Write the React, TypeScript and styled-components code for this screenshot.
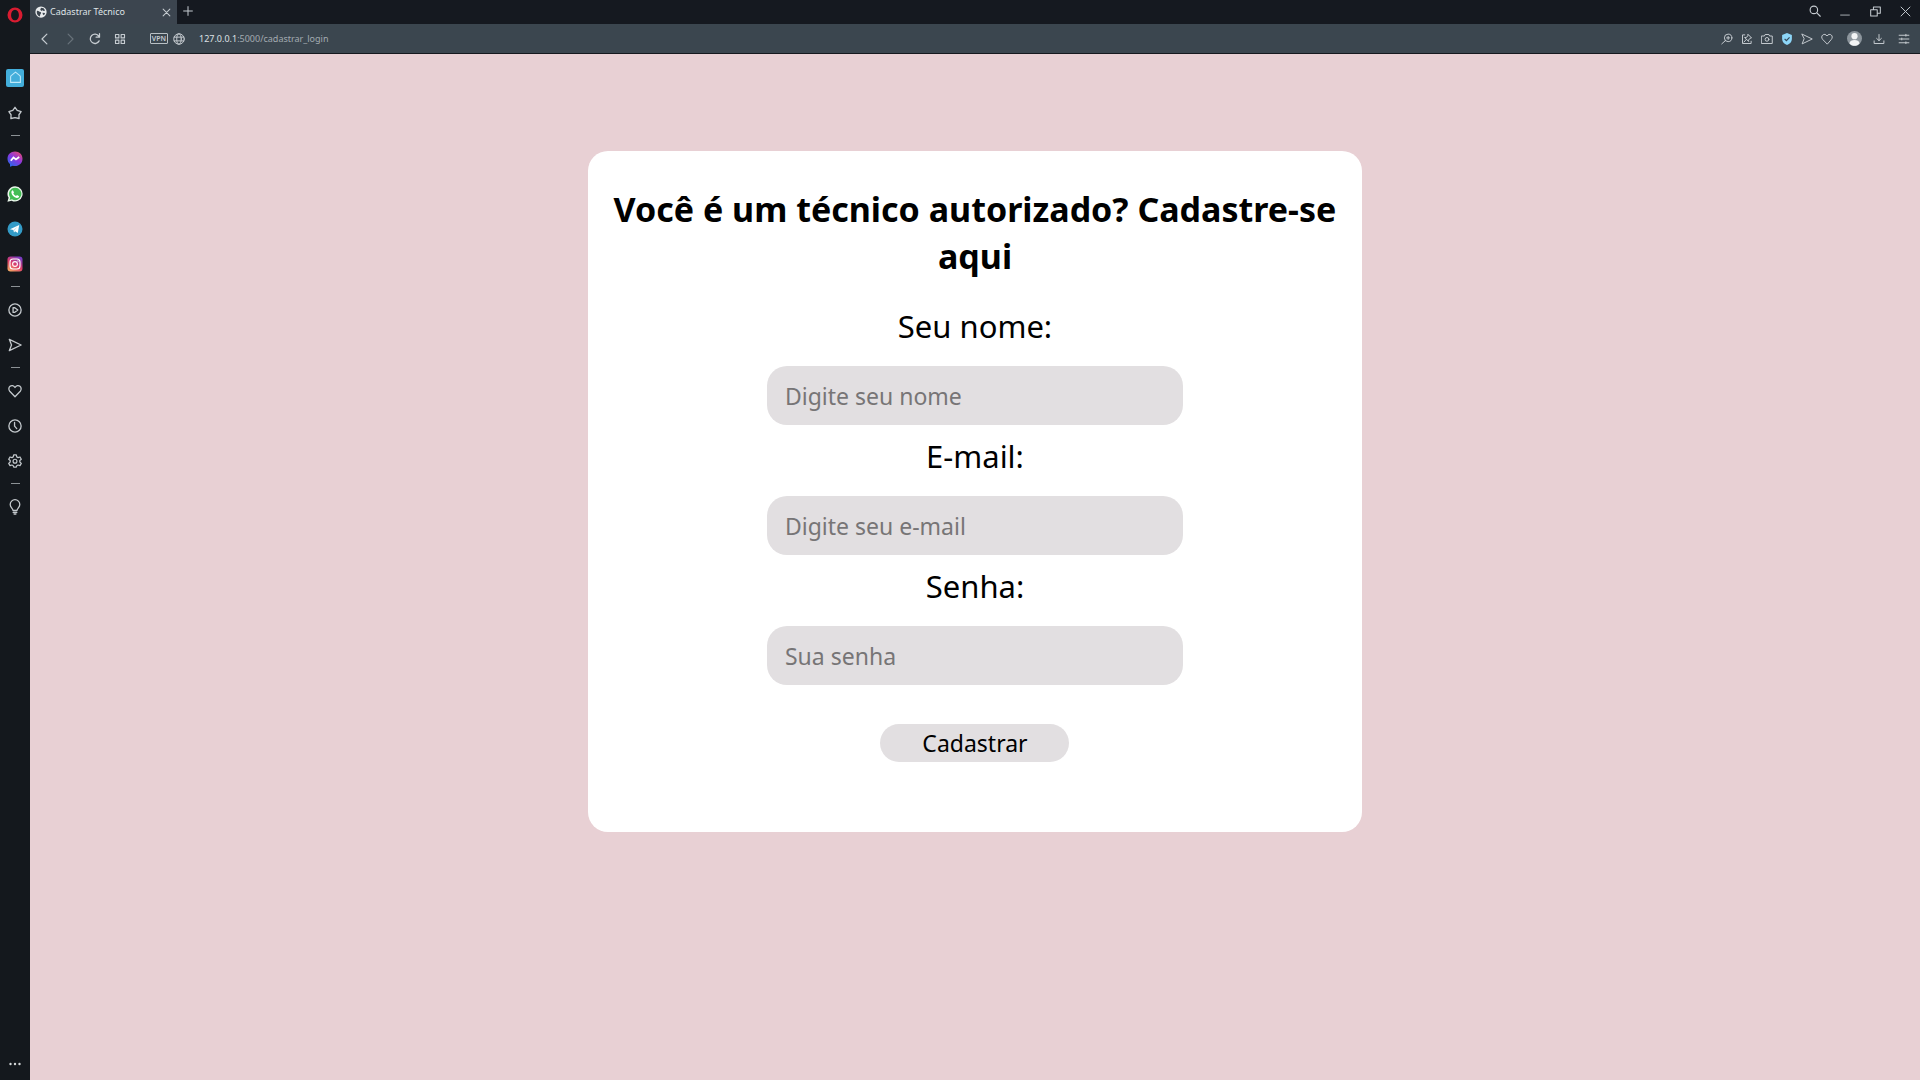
import React from "react";
import styled, { createGlobalStyle } from "styled-components";

const uiFont = '"Noto Sans", "Open Sans", sans-serif';
const pageFont = '"Trebuchet MS", "Noto Sans", sans-serif';

const GlobalStyle = createGlobalStyle`
  *, *::before, *::after { box-sizing: border-box; }
  body { margin: 0; font-family: ${uiFont}; }
  button, input { font: inherit; color: inherit; }
`;

const Browser = styled.div`
  display: grid;
  grid-template-columns: 30px minmax(0, 1fr);
  height: 100vh;
  background: #14181d;
`;

const Sidebar = styled.nav`
  display: flex;
  flex-direction: column;
  align-items: center;
  color: #c3c8cc;
`;

const OperaButton = styled.button`
  display: grid;
  place-items: center;
  width: 30px;
  height: 30px;
  margin-bottom: 30px;
  padding: 0;
  border: 0;
  background: none;
`;

const SideButton = styled.button`
  display: grid;
  place-items: center;
  flex: none;
  width: 30px;
  height: 35px;
  padding: 0;
  border: 0;
  background: none;
`;

const MoreButton = styled(SideButton)`
  height: 32px;
  margin-top: auto;
`;

const HomeTile = styled.span`
  display: grid;
  place-items: center;
  width: 18px;
  height: 18px;
  border-radius: 2px;
  background: #43aedb;
  color: #bfe9fa;
`;

const Divider = styled.hr`
  flex: none;
  width: 9px;
  height: 1px;
  margin: 5px 0;
  border: 0;
  background: #8c9195;
`;

const Window = styled.div`
  display: grid;
  grid-template-rows: 24px 30px minmax(0, 1fr);
  min-width: 0;
`;

const TabBar = styled.header`
  display: flex;
  justify-content: space-between;
  background: #151920;
`;

const TabGroup = styled.div`
  display: flex;
`;

const Tab = styled.div`
  display: flex;
  align-items: center;
  gap: 3px;
  width: 147px;
  padding: 0 5px;
  background: #3c454f;
  color: #dfe3e6;
`;

const TabTitle = styled.span`
  flex: 1;
  font-size: 9px;
  line-height: 12px;
  white-space: nowrap;
`;

const IconButton = styled.button<{ $width?: number; $color?: string }>`
  display: grid;
  place-items: center;
  flex: none;
  width: ${(p) => p.$width ?? 20}px;
  height: 22px;
  padding: 0;
  border: 0;
  background: none;
  color: ${(p) => p.$color ?? "#c6ccd1"};
`;

const WindowControls = styled.div`
  display: flex;
`;

const Toolbar = styled.div`
  display: flex;
  align-items: center;
  padding: 0 4px 0 2px;
  border-bottom: 1px solid #15191e;
  background: #3b464f;
`;

const VpnBadge = styled.button`
  flex: none;
  width: 18px;
  height: 11px;
  margin: 0 1px 0 18px;
  padding: 0;
  border: 1px solid #b9c0c5;
  border-radius: 1px;
  background: none;
  color: #c6ccd1;
  font-size: 7px;
  font-weight: 600;
  line-height: 9px;
  text-align: center;
`;

const Address = styled.div`
  flex: 1;
  padding-left: 10px;
  font-size: 9px;
  line-height: 14px;
  color: #a3abb1;
`;

const Host = styled.span`
  color: #dde1e4;
`;

const Actions = styled.div`
  display: flex;
`;

const Profile = styled.div`
  display: flex;
  margin-left: 6px;
`;

const Page = styled.main`
  overflow: auto;
  padding: 97px 0 40px;
  background: #e8d0d4;
  font-family: ${pageFont};
`;

const Card = styled.form`
  display: flex;
  flex-direction: column;
  align-items: center;
  width: 41%;
  min-width: 480px;
  margin: 0 auto;
  padding: 35px 16px 70px;
  border-radius: 20px;
  background: #fff;
  color: #000;
`;

const Title = styled.h1`
  margin: 0 0 15px;
  font-size: 34px;
  font-weight: 700;
  line-height: 47px;
  text-align: center;
`;

const Field = styled.div`
  display: flex;
  flex-direction: column;
  align-items: center;
  width: 416px;
  max-width: 100%;
  padding-top: 11px;
`;

const Label = styled.label`
  margin-bottom: 20px;
  font-size: 31px;
  line-height: 40px;
`;

const TextInput = styled.input`
  width: 100%;
  height: 59px;
  padding: 0 18px;
  border: 0;
  border-radius: 20px;
  outline: none;
  background: #e2dfe1;
  font-size: 23px;

  &::placeholder {
    color: #777576;
    opacity: 1;
  }
`;

const Submit = styled.button`
  width: 189px;
  height: 38px;
  margin-top: 39px;
  padding: 0;
  border: 0;
  border-radius: 20px;
  background: #e2dfe1;
  font-size: 23px;
  line-height: 38px;
`;

type IconProps = { size?: number; weight?: number; children: React.ReactNode };

function Icon({ size = 14, weight = 1.3, children }: IconProps) {
  return (
    <svg
      width={size}
      height={size}
      viewBox="0 0 16 16"
      fill="none"
      stroke="currentColor"
      strokeWidth={weight}
      strokeLinecap="round"
      strokeLinejoin="round"
      aria-hidden="true"
    >
      {children}
    </svg>
  );
}

const heart = "M8 14.500 2 8.300C.5 6.500.7 4 2.300 2.700 4 1.300 6.500 1.600 8 4c1.500-2.400 4-2.700 5.700-1.300 1.600 1.300 1.800 3.800.3 5.600z";
const plane = "M1.500 1.500 15 8 1.500 14.500 4 8z";

const sideItems: { name: string; icon: React.ReactNode }[][] = [
  [
    {
      name: "Início",
      icon: (
        <HomeTile>
          <Icon size={13}><path d="M2 7c0-.6.3-1 .7-1.400L8 1.300l5.300 4.300c.4.4.7.8.7 1.400v7h-3.500M2 7v7h3.500M5.500 14h5" /></Icon>
        </HomeTile>
      ),
    },
    {
      name: "Favoritos",
      icon: <Icon weight={1.5}><path d="M8 1.500 10.500 5l4.500 1.500L12.500 10l.2 4.300L8 13.200l-4.700 1.100.2-4.300L1 6.500 5.500 5z" /></Icon>,
    },
  ],
  [
    {
      name: "Messenger",
      icon: (
        <svg width="16" height="16" viewBox="0 0 16 16" aria-hidden="true">
          <defs>
            <linearGradient id="msg" x1="0.2" y1="1" x2="0.9" y2="0">
              <stop offset="0" stopColor="#256bea" />
              <stop offset="0.5" stopColor="#8937e0" />
              <stop offset="1" stopColor="#ee4c6c" />
            </linearGradient>
          </defs>
          <path d="M8 .5c4.300 0 7.500 3 7.500 7.200S12.300 15 8 15c-.8 0-1.500-.1-2.200-.3L3 15.800V13C1.400 11.700.5 9.900.5 7.700.5 3.500 3.700.5 8 .5z" fill="url(#msg)" />
          <path d="m3.800 9.800 2.700-3.300 2.500 1.900 3.200-2.300" fill="none" stroke="#fff" strokeWidth="1.800" />
        </svg>
      ),
    },
    {
      name: "WhatsApp",
      icon: (
        <svg width="16" height="16" viewBox="0 0 16 16" aria-hidden="true">
          <path d="M8.200.3a7.600 7.600 0 1 1-3.600 14.400L.4 15.800l1.200-4A7.600 7.600 0 0 1 8.200.3z" fill="#e9f5ea" />
          <path d="M8.200 1.700a6.200 6.200 0 1 1-3.200 11.500l-2.500.7.700-2.400a6.200 6.200 0 0 1 5-9.800z" fill="#43bd55" />
          <path d="M5.900 4.300 7 6.600l-.7 1c.7 1.200 1.500 1.900 2.700 2.400l1-.9 2.100 1.100c0 1.200-1.200 1.900-2.400 1.700-2.700-.5-5-2.900-5.300-5.200-.1-1.200.5-2.200 1.500-2.400z" fill="#fff" />
        </svg>
      ),
    },
    {
      name: "Telegram",
      icon: (
        <svg width="16" height="16" viewBox="0 0 16 16" aria-hidden="true">
          <circle cx="8" cy="8" r="7.500" fill="#349bc7" />
          <path d="m3 8.200 9.200-4.100-1.400 8-2.700-1.800L7 11.600l-.6-2.500z" fill="#fff" />
          <path d="m6.500 9.100 4.200-3.500-3.500 4.100z" fill="#b8dbea" />
        </svg>
      ),
    },
    {
      name: "Instagram",
      icon: (
        <svg width="16" height="16" viewBox="0 0 16 16" aria-hidden="true">
          <defs>
            <linearGradient id="ig" x1="0.1" y1="1" x2="0.7" y2="0">
              <stop offset="0" stopColor="#f6b264" />
              <stop offset="0.5" stopColor="#de3d68" />
              <stop offset="1" stopColor="#7b3cc4" />
            </linearGradient>
          </defs>
          <rect x="0.500" y="0.500" width="15" height="15" rx="3" fill="url(#ig)" />
          <rect x="3" y="3" width="10" height="10" rx="3" fill="none" stroke="#fff" strokeWidth="1.100" />
          <circle cx="8" cy="8" r="2.400" fill="none" stroke="#fff" strokeWidth="1.100" />
          <circle cx="11" cy="5" r="0.700" fill="#fff" />
        </svg>
      ),
    },
  ],
  [
    { name: "Player", icon: <Icon weight={1.5}><circle cx="8" cy="8" r="7" /><path d="M5.800 5.200v5.600l2-.2L11.200 8 7.800 5.400z" /></Icon> },
    { name: "Meu Fluxo", icon: <Icon weight={1.5}><path d={plane} /></Icon> },
  ],
  [
    { name: "Curtidas", icon: <Icon weight={1.5}><path d={heart} /></Icon> },
    { name: "Histórico", icon: <Icon weight={1.5}><circle cx="8" cy="8" r="7" /><path d="M7.500 4v4.200L10 11" /></Icon> },
    {
      name: "Configurações",
      icon: (
        <Icon weight={1.4}>
          <path d="M6.500 1h3l.5 2.300 1.500.8 2.200-.7 1.500 2.600-1.700 1.500v1.700l1.700 1.500-1.500 2.600-2.200-.7-1.500.8L9.500 15h-3L6 13.400l-1.500-.8-2.200.7-1.500-2.600 1.700-1.500V7.500L.8 6l1.500-2.600 2.200.7L6 3.300z" />
          <circle cx="8" cy="8.200" r="2.200" />
        </Icon>
      ),
    },
  ],
  [
    { name: "Dicas", icon: <Icon size={16}><path d="M6 11.500C5.800 9.500 3.200 8.500 3.200 5.500a4.800 4.800 0 0 1 9.600 0c0 3-2.600 4-2.800 6zM6.200 13.500h3.600M7.200 15.200h1.600" /></Icon> },
  ],
];

const actions: { name: string; icon: React.ReactNode }[] = [
  { name: "Zoom", icon: <Icon size={12}><circle cx="9.500" cy="6.500" r="5" /><path d="M6 10 1 14.500M9.500 4.500v4M7.500 6.500h4" /></Icon> },
  { name: "Fixar", icon: <Icon size={12}><path d="M5 2.500H2V14h11.500v-3M9.500 2 14 6.500l-2 .5-2 2.500.2 1.800-5.400-5.400 1.900.2L9 4zM7.200 8.500 4 12" /></Icon> },
  { name: "Captura", icon: <Icon size={12}><path d="M1 4h3.500l1-2h5l1 2H15v10H1z" /><circle cx="8" cy="8.500" r="2.500" /></Icon> },
  {
    name: "Proteção",
    icon: (
      <svg width="12" height="12" viewBox="0 0 16 16" aria-hidden="true">
        <path d="M8 0 14.500 2.500V8c0 4-2.700 6.500-6.500 8-3.800-1.500-6.500-4-6.500-8V2.500z" fill="#8dd6f8" />
        <path d="m4.800 7.800 2.400 2.400 4.200-4.400" fill="none" stroke="#33485a" strokeWidth="1.600" />
      </svg>
    ),
  },
  { name: "Enviar", icon: <Icon size={12}><path d={plane} /></Icon> },
  { name: "Favoritar", icon: <Icon size={12}><path d={heart} /></Icon> },
];

const fields = [
  { id: "nome", label: "Seu nome:", type: "text", hint: "Digite seu nome" },
  { id: "email", label: "E-mail:", type: "email", hint: "Digite seu e-mail" },
  { id: "senha", label: "Senha:", type: "password", hint: "Sua senha" },
];

export default function App() {
  return (
    <Browser>
      <GlobalStyle />
      <Sidebar>
        <OperaButton aria-label="Menu">
          <svg width="16" height="16" viewBox="0 0 16 16" aria-hidden="true">
            <path fillRule="evenodd" d="M8 .5a7.500 7.500 0 1 1 0 15 7.500 7.500 0 0 1 0-15zm0 2.200c-2.300 0-3.900 2.200-3.900 5.300s1.600 5.300 3.900 5.300 3.900-2.200 3.900-5.300S10.300 2.700 8 2.700z" fill="#d91c31" />
          </svg>
        </OperaButton>
        {sideItems.map((group, index) => (
          <React.Fragment key={group[0].name}>
            {index > 0 && <Divider />}
            {group.map((item) => (
              <SideButton key={item.name} aria-label={item.name}>{item.icon}</SideButton>
            ))}
          </React.Fragment>
        ))}
        <MoreButton aria-label="Mais">
          <svg width="14" height="4" viewBox="0 0 14 4" fill="#d5d8da" aria-hidden="true">
            <circle cx="2.500" cy="2" r="1.200" /><circle cx="7" cy="2" r="1.200" /><circle cx="11.500" cy="2" r="1.200" />
          </svg>
        </MoreButton>
      </Sidebar>

      <Window>
        <TabBar>
          <TabGroup>
            <Tab>
              <svg width="12" height="12" viewBox="0 0 16 16" aria-hidden="true">
                <circle cx="8" cy="8" r="7.500" fill="#e8eaec" />
                <path d="M2.500 6.500c2-.5 3 1 4.500 1.500s1.500 1.500.5 2.500-.5 2.500-1 3.500C3.500 13 1.800 10 2.500 6.500zM8 2.200l3.500.8 2 3-2 .5L10 5.800 8.500 6.500 7 5zM10 9l3.500.2-1.500 3-1.500-1z" fill="#3c454f" />
              </svg>
              <TabTitle>Cadastrar Técnico</TabTitle>
              <IconButton $width={12} aria-label="Fechar guia"><Icon size={9} weight={1.8}><path d="m2 2 12 12M14 2 2 14" /></Icon></IconButton>
            </Tab>
            <IconButton $width={22} aria-label="Nova guia"><Icon size={10} weight={1.6}><path d="M8 1v14M1 8h14" /></Icon></IconButton>
          </TabGroup>
          <WindowControls>
            <IconButton $width={30} aria-label="Pesquisar guias"><Icon size={12} weight={1.5}><circle cx="6.500" cy="6.500" r="5" /><path d="m10.500 10.500 4.500 4.500" /></Icon></IconButton>
            <IconButton $width={30} aria-label="Minimizar"><Icon size={10}><path d="M1 14.500h14" /></Icon></IconButton>
            <IconButton $width={30} aria-label="Restaurar"><Icon size={11} weight={1.5}><path d="M1 5.500h9.500v9H1zM5 5.500v-4h10v9h-4.500" /></Icon></IconButton>
            <IconButton $width={30} aria-label="Fechar"><Icon size={11} weight={1.4}><path d="m1.500 1.500 13 13M14.500 1.500l-13 13" /></Icon></IconButton>
          </WindowControls>
        </TabBar>

        <Toolbar>
          <IconButton $width={25} aria-label="Voltar"><Icon size={12} weight={1.6}><path d="M10.500 1.500 4 8l6.500 6.500" /></Icon></IconButton>
          <IconButton $width={25} $color="#68727a" aria-label="Avançar"><Icon size={12} weight={1.6}><path d="M5.500 1.500 12 8l-6.500 6.500" /></Icon></IconButton>
          <IconButton $width={25} aria-label="Recarregar"><Icon size={12} weight={1.7}><path d="M13.500 10.500A6.200 6.200 0 1 1 13 4.200M14 1v4.500H9.500" /></Icon></IconButton>
          <IconButton $width={25} aria-label="Speed Dial"><Icon size={12} weight={1.5}><path d="M2 2h4.500v4.500H2zM9.500 2H14v4.500H9.500zM2 9.500h4.500V14H2zM9.500 9.500H14V14H9.500z" /></Icon></IconButton>
          <VpnBadge>VPN</VpnBadge>
          <IconButton aria-label="Informações do site"><Icon size={12}><circle cx="8" cy="8" r="7" /><ellipse cx="8" cy="8" rx="3" ry="7" /><path d="M1.500 5.500h13M1.500 10.500h13" /></Icon></IconButton>
          <Address><Host>127.0.0.1</Host>:5000/cadastrar_login</Address>
          <Actions>
            {actions.map((a) => (
              <IconButton key={a.name} aria-label={a.name}>{a.icon}</IconButton>
            ))}
          </Actions>
          <Profile>
            <IconButton $width={23} aria-label="Perfil">
              <svg width="15" height="15" viewBox="0 0 16 16" aria-hidden="true">
                <circle cx="8" cy="8" r="8" fill="#8d969d" />
                <circle cx="8" cy="5.500" r="3.300" fill="#f2f4f5" />
                <path d="M2.600 13c.5-2.500 2.600-3.500 5.400-3.500s4.900 1 5.400 3.500C12 15 10 15.800 8 15.800S4 15 2.600 13z" fill="#f2f4f5" />
              </svg>
            </IconButton>
            <IconButton $width={25} aria-label="Downloads"><Icon size={12}><path d="M1.500 10.500V14h13v-3.500M8 2v8M4.800 7.200 8 10.200l3.200-3" /></Icon></IconButton>
            <IconButton $width={25} aria-label="Configuração fácil"><Icon size={12}><path d="M1.500 3h13M1.500 8h13M1.500 13h13M10.500 1.800v2.400M5 6.800v2.400M10.500 11.800v2.400" /></Icon></IconButton>
          </Profile>
        </Toolbar>

        <Page>
          <Card onSubmit={(e) => e.preventDefault()}>
            <Title>Você é um técnico autorizado? Cadastre-se aqui</Title>
            {fields.map((f) => (
              <Field key={f.id}>
                <Label htmlFor={f.id}>{f.label}</Label>
                <TextInput id={f.id} type={f.type} placeholder={f.hint} />
              </Field>
            ))}
            <Submit type="submit">Cadastrar</Submit>
          </Card>
        </Page>
      </Window>
    </Browser>
  );
}
